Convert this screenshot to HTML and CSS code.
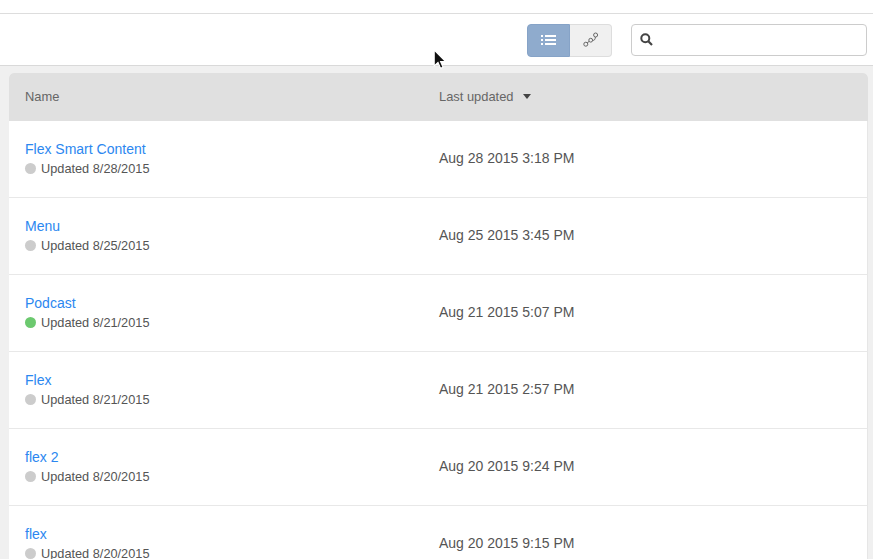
FILE: index.html
```html
<!DOCTYPE html>
<html lang="en">
<head>
<meta charset="utf-8">
<title>Content</title>
<link rel="stylesheet" href="styles.css">
</head>
<body>
<div class="top-strip"></div>
<div class="toolbar">
  <div class="view-toggle">
    <button class="toggle toggle-list" aria-label="List view">
      <svg class="icon-list" width="15" height="12" viewBox="0 0 15 12"><g fill="#fff"><rect x="0" y="1" width="2" height="2"/><rect x="0" y="5" width="2" height="2"/><rect x="0" y="9" width="2" height="2"/><rect x="4" y="1" width="11" height="2"/><rect x="4" y="5" width="11" height="2"/><rect x="4" y="9" width="11" height="2"/></g></svg>
    </button>
    <button class="toggle toggle-graph" aria-label="Graph view">
      <svg class="icon-graph" width="15" height="15" viewBox="0 0 15 15"><g fill="none" stroke="#666" stroke-width="1"><circle cx="2.8" cy="12.2" r="2"/><circle cx="7.7" cy="8.2" r="1.9"/><circle cx="12.6" cy="3" r="2"/><path d="M4.2 10.8 6.2 9.4M9.5 8.4c1.8.2 2.7-.8 2.9-3.4"/></g></svg>
    </button>
  </div>
  <label class="search">
    <svg class="icon-search" width="13" height="13" viewBox="0 0 13 13"><circle cx="5.3" cy="5.3" r="4" fill="none" stroke="#444" stroke-width="2"/><path d="M8.3 8.3 12 12" stroke="#444" stroke-width="2.2"/></svg>
    <input class="search-input" type="text" aria-label="Search">
  </label>
</div>
<main class="content">
  <div class="card">
    <div class="row head">
      <div class="col-name">Name</div>
      <div class="col-date">Last updated <span class="caret"></span></div>
    </div>
    <div class="row item">
      <div class="col-name"><a class="title" href="#">Flex Smart Content</a><div class="status"><span class="dot"></span>Updated 8/28/2015</div></div>
      <div class="col-date date">Aug 28 2015 3:18 PM</div>
    </div>
    <div class="row item">
      <div class="col-name"><a class="title" href="#">Menu</a><div class="status"><span class="dot"></span>Updated 8/25/2015</div></div>
      <div class="col-date date">Aug 25 2015 3:45 PM</div>
    </div>
    <div class="row item">
      <div class="col-name"><a class="title" href="#">Podcast</a><div class="status"><span class="dot live"></span>Updated 8/21/2015</div></div>
      <div class="col-date date">Aug 21 2015 5:07 PM</div>
    </div>
    <div class="row item">
      <div class="col-name"><a class="title" href="#">Flex</a><div class="status"><span class="dot"></span>Updated 8/21/2015</div></div>
      <div class="col-date date">Aug 21 2015 2:57 PM</div>
    </div>
    <div class="row item">
      <div class="col-name"><a class="title" href="#">flex 2</a><div class="status"><span class="dot"></span>Updated 8/20/2015</div></div>
      <div class="col-date date">Aug 20 2015 9:24 PM</div>
    </div>
    <div class="row item">
      <div class="col-name"><a class="title" href="#">flex</a><div class="status"><span class="dot"></span>Updated 8/20/2015</div></div>
      <div class="col-date date">Aug 20 2015 9:15 PM</div>
    </div>
  </div>
</main>
<svg class="cursor" width="14" height="21" viewBox="0 0 13 20"><path d="M1 1v15l3.6-3.3 2.4 5.6 2.4-1-2.4-5.4h4.6z" fill="#111" stroke="#fff" stroke-width="1"/></svg>
</body>
</html>
```
FILE: styles.css
```css
* { box-sizing: border-box; }
html, body { margin: 0; height: 100%; overflow: hidden; }
body { background: #f0f0f0; font-family: "Liberation Sans", Arial, sans-serif; color: #555; position: relative; }
.top-strip { height: 14px; background: #fff; border-bottom: 1px solid #ddd; }
.toolbar { height: 52px; background: #fff; border-bottom: 1px solid #d9d9d9; display: flex; justify-content: flex-end; align-items: flex-start; padding: 10px 6px 0 0; gap: 19px; }
.view-toggle { display: flex; height: 33px; }
.toggle { padding: 0; margin: 0; display: flex; align-items: center; justify-content: center; height: 33px; }
.toggle-list { width: 43px; background: #8fabcd; border: 1px solid #86a3c7; border-radius: 4px 0 0 4px; }
.icon-list { margin-bottom: 2px; }
.toggle-graph { width: 42px; background: #f0f0f0; border: 1px solid #ddd; border-left: 0; border-radius: 0 4px 4px 0; }
.icon-graph { margin-bottom: 3px; }
.search { width: 236px; height: 32px; background: #fff; border: 1px solid #ccc; border-radius: 4px; display: flex; align-items: center; padding-left: 8px; }
.icon-search { margin-bottom: 2px; }
.search-input { flex: 1; border: 0; outline: 0; background: transparent; height: 100%; min-width: 0; }
.content { padding: 7px 5px 0 9px; }
.card { background: #fff; border-radius: 5px 5px 0 0; overflow: hidden; }
.row { display: flex; align-items: center; }
.col-name { width: 430px; padding-left: 16px; }
.head { height: 48px; background: #e0e0e0; font-size: 12.9px; color: #666; padding-bottom: 2px; }
.caret { display: inline-block; width: 0; height: 0; margin-left: 6px; vertical-align: 2px; border-left: 4.5px solid transparent; border-right: 4.5px solid transparent; border-top: 5px solid #444; }
.item { height: 77px; border-bottom: 1px solid #e8e8e8; padding-bottom: 3px; border-right: 1px solid #e6e6e6; }
.item .col-name { padding-top: 3px; }
.title { display: block; font-size: 14px; line-height: 18px; color: #2b87f0; text-decoration: none; }
.status { display: flex; align-items: center; font-size: 12.75px; line-height: 18px; margin-top: 2px; color: #555; }
.dot { width: 11px; height: 11px; border-radius: 50%; background: #ccc; margin-right: 5px; flex: none; position: relative; top: -1px; }
.dot.live { background: #6cc96f; }
.date { font-size: 14px; color: #555; }
.cursor { position: absolute; left: 433px; top: 49px; }
```
